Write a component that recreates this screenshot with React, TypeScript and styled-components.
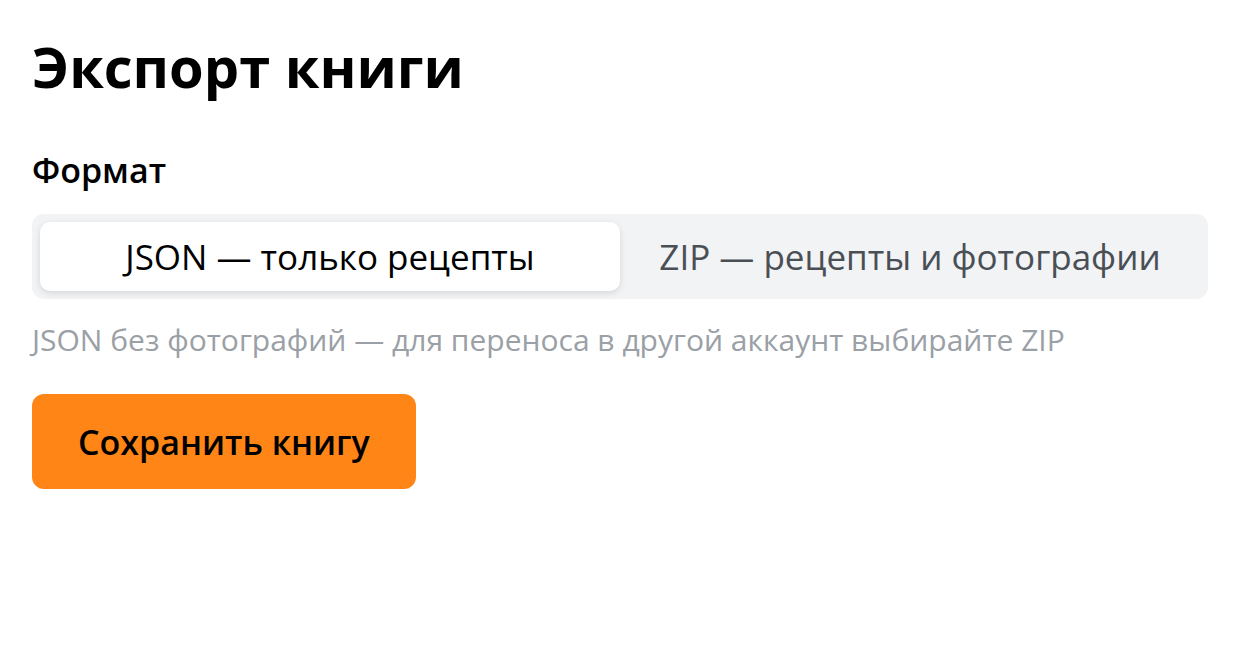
import React, { useState } from "react";
import styled, { createGlobalStyle } from "styled-components";

const Global = createGlobalStyle`
  html, body { margin: 0; padding: 0; background: #ffffff; }
  body { font-family: "Open Sans", "Noto Sans", sans-serif; color: #000; }
  * { box-sizing: border-box; }
`;

const Page = styled.div`
  padding: 28px 32px;
  display: flex;
  flex-direction: column;
  align-items: flex-start;
`;

const Title = styled.h1`
  margin: 0;
  font-size: 56px;
  line-height: 76px;
  font-weight: 700;
`;

const Label = styled.div`
  margin-top: 43px;
  font-size: 34px;
  line-height: 46px;
  font-weight: 600;
`;

const Segmented = styled.div`
  margin-top: 21px;
  width: 1176px;
  display: grid;
  grid-template-columns: 1fr 1fr;
  padding: 8px;
  background: #f1f3f5;
  border-radius: 12px;
`;

const Tab = styled.button<{ $active: boolean }>`
  height: 69px;
  border: none;
  border-radius: 10px;
  font-family: inherit;
  font-size: 35px;
  font-weight: 400;
  cursor: pointer;
  background: ${(p) => (p.$active ? "#ffffff" : "transparent")};
  color: ${(p) => (p.$active ? "#000000" : "#4a4f55")};
  box-shadow: ${(p) => (p.$active ? "0 2px 6px rgba(0,0,0,0.12)" : "none")};
`;

const Hint = styled.div`
  margin-top: 21px;
  font-size: 30px;
  line-height: 40px;
  color: #9aa0a6;
`;

const SaveButton = styled.button`
  margin-top: 34px;
  height: 95px;
  padding: 0 46px;
  border: none;
  border-radius: 12px;
  background: #ff8516;
  color: #000;
  font-family: inherit;
  font-size: 34px;
  font-weight: 600;
  cursor: pointer;
`;

export default function App() {
  const [fmt, setFmt] = useState<"json" | "zip">("json");
  return (
    <>
      <Global />
      <Page>
        <Title>Экспорт книги</Title>
        <Label>Формат</Label>
        <Segmented>
          <Tab $active={fmt === "json"} onClick={() => setFmt("json")}>
            JSON — только рецепты
          </Tab>
          <Tab $active={fmt === "zip"} onClick={() => setFmt("zip")}>
            ZIP — рецепты и фотографии
          </Tab>
        </Segmented>
        <Hint>JSON без фотографий — для переноса в другой аккаунт выбирайте ZIP</Hint>
        <SaveButton>Сохранить книгу</SaveButton>
      </Page>
    </>
  );
}
